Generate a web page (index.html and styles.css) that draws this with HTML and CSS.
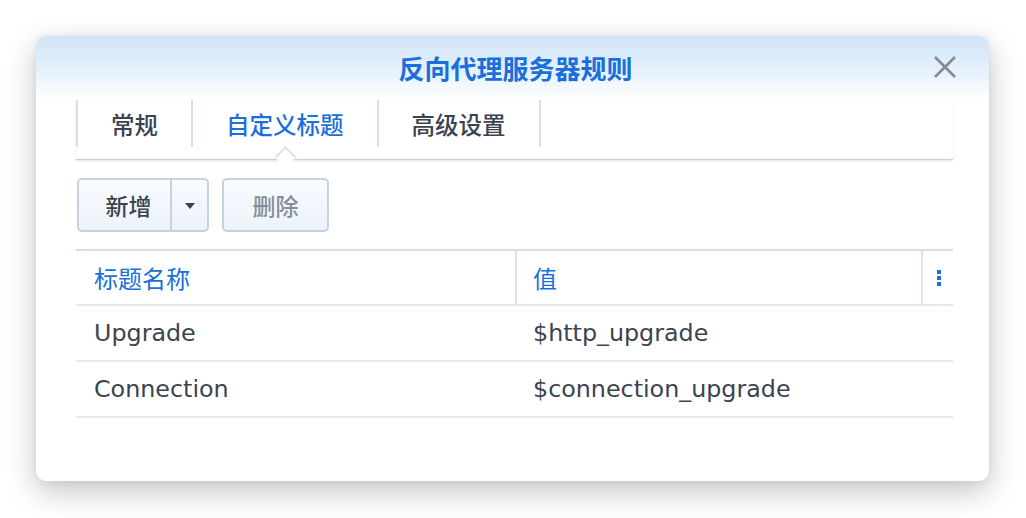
FILE: index.html
```html
<!DOCTYPE html>
<html lang="zh">
<head>
<meta charset="utf-8">
<title>反向代理服务器规则</title>
<link rel="stylesheet" href="styles.css">
</head>
<body>
<div class="dialog">
  <div class="header">
    <div class="title">反向代理服务器规则</div>
    <button class="close" aria-label="关闭">
      <svg width="24" height="22" viewBox="0 0 24 22"><path d="M2 1 L22 21 M22 1 L2 21" stroke="#858a92" stroke-width="2.6" fill="none"/></svg>
    </button>
  </div>
  <div class="body">
    <div class="tabbar">
      <div class="tab">常规</div>
      <div class="tab active">自定义标题</div>
      <div class="tab last">高级设置</div>
    </div>
    <div class="toolbar">
      <div class="split">
        <span class="split-main">新增</span>
        <span class="split-arrow"><svg width="10" height="6" viewBox="0 0 10 6"><path d="M0 0 H10 L5 6 Z" fill="#3b4350"/></svg></span>
      </div>
      <div class="btn disabled">删除</div>
    </div>
    <div class="grid">
      <div class="row head">
        <div class="cell c1">标题名称</div>
        <div class="cell c2">值</div>
        <div class="cell c3"><span class="dots"><i></i><i></i><i></i></span></div>
      </div>
      <div class="row">
        <div class="cell c1">Upgrade</div>
        <div class="cell c2">$http_upgrade</div>
        <div class="cell c3"></div>
      </div>
      <div class="row">
        <div class="cell c1">Connection</div>
        <div class="cell c2">$connection_upgrade</div>
        <div class="cell c3"></div>
      </div>
    </div>
  </div>
</div>
</body>
</html>
```

FILE: styles.css
```css
* { box-sizing: border-box; }
html, body { margin: 0; padding: 0; background: #ffffff; }
body {
  width: 1026px;
  height: 518px;
  overflow: hidden;
  font-family: "DejaVu Sans", "Noto Sans CJK SC", sans-serif;
  color: #3b4350;
  padding: 36px 0 0 36px;
}
.dialog {
  width: 953px;
  height: 445px;
  background: #ffffff;
  border-radius: 10px;
  box-shadow: 0 10px 30px rgba(0, 0, 0, 0.24), 0 0 6px rgba(0, 0, 0, 0.06);
  overflow: hidden;
}
.header {
  height: 64px;
  background: linear-gradient(to bottom, #cfe4f6 0%, #e6f1fc 55%, #ffffff 100%);
  display: flex;
  align-items: center;
  justify-content: center;
  position: relative;
  padding-bottom: 1px;
  padding-left: 6px;
}
.title {
  font-family: "Noto Sans CJK SC", sans-serif;
  font-size: 26px;
  font-weight: 700;
  color: #1a6fdc;
}
.close {
  position: absolute;
  right: 32px;
  top: 20px;
  border: 0;
  background: transparent;
  padding: 0;
  width: 24px;
  height: 22px;
}
.close svg { display: block; }
.body {
  padding: 0 36px 0 40px;
}
.tabbar {
  display: flex;
  height: 60px;
  padding-bottom: 13px;
  border-bottom: 1px solid #c6ccd3;
  box-shadow: 0 1px 2px rgba(0, 0, 0, 0.12);
  position: relative;
}
.tab {
  height: 47px;
  padding: 0 33px;
  border-left: 2px solid #d6e0ec;
  display: flex;
  align-items: center;
  font-family: "Noto Sans CJK SC", sans-serif;
  font-size: 23.5px;
  font-weight: 500;
  color: #3b4350;
  position: relative;
}
.tab.last { border-right: 2px solid #d6e0ec; }
.tab.active { color: #1a6fdc; }
.tab.active::after {
  content: "";
  position: absolute;
  left: 50%;
  bottom: -18px;
  width: 14px;
  height: 14px;
  margin-left: -7px;
  background: #ffffff;
  border-left: 1px solid #c6ccd3;
  border-top: 1px solid #c6ccd3;
  transform: rotate(45deg);
  box-shadow: -1px -1px 1px rgba(0, 0, 0, 0.05);
}
.toolbar {
  display: flex;
  gap: 13px;
  margin-top: 18px;
  padding-left: 1px;
}
.split, .btn {
  height: 54px;
  border: 2px solid #c8d2de;
  border-radius: 5px;
  background: linear-gradient(to bottom, #f8fbff, #edf3fb);
  display: flex;
  align-items: center;
  font-family: "Noto Sans CJK SC", sans-serif;
  font-size: 23px;
  font-weight: 500;
  color: #3b4350;
}
.split { width: 132px; }
.split-main {
  width: 93px;
  height: 100%;
  display: flex;
  align-items: center;
  justify-content: center;
  padding-left: 8px;
  border-right: 2px solid #c8d2de;
}
.split-arrow {
  flex: 1;
  display: flex;
  align-items: center;
  justify-content: center;
  height: 100%;
}
.split-arrow svg { display: block; margin-top: 2px; }
.btn {
  width: 107px;
  justify-content: center;
}
.btn.disabled { color: #858d98; }
.grid {
  margin-top: 17px;
  border-top: 2px solid #d5dfea;
}
.row {
  display: flex;
  height: 56px;
  border-bottom: 2px solid #e4e9ef;
  align-items: stretch;
}
.row.head { height: 55px; border-bottom-color: #e2e8ef; }
.cell {
  display: flex;
  align-items: center;
  font-size: 23.8px;
}
.head .cell {
  font-family: "Noto Sans CJK SC", sans-serif;
  font-size: 24px;
  color: #1a6fdc;
}
.c1 { width: 439px; padding-left: 18px; }
.c2 { width: 406px; padding-left: 18px; }
.head .c2 { padding-left: 16px; }
.c3 { flex: 1; justify-content: center; }
.head .c2, .head .c3 { border-left: 2px solid #dbe5f0; }
.head .c3 { padding-left: 1px; }
.dots {
  display: flex;
  flex-direction: column;
  gap: 2px;
}
.dots i {
  display: block;
  width: 4px;
  height: 4px;
  background: #1a6fdc;
}
```
